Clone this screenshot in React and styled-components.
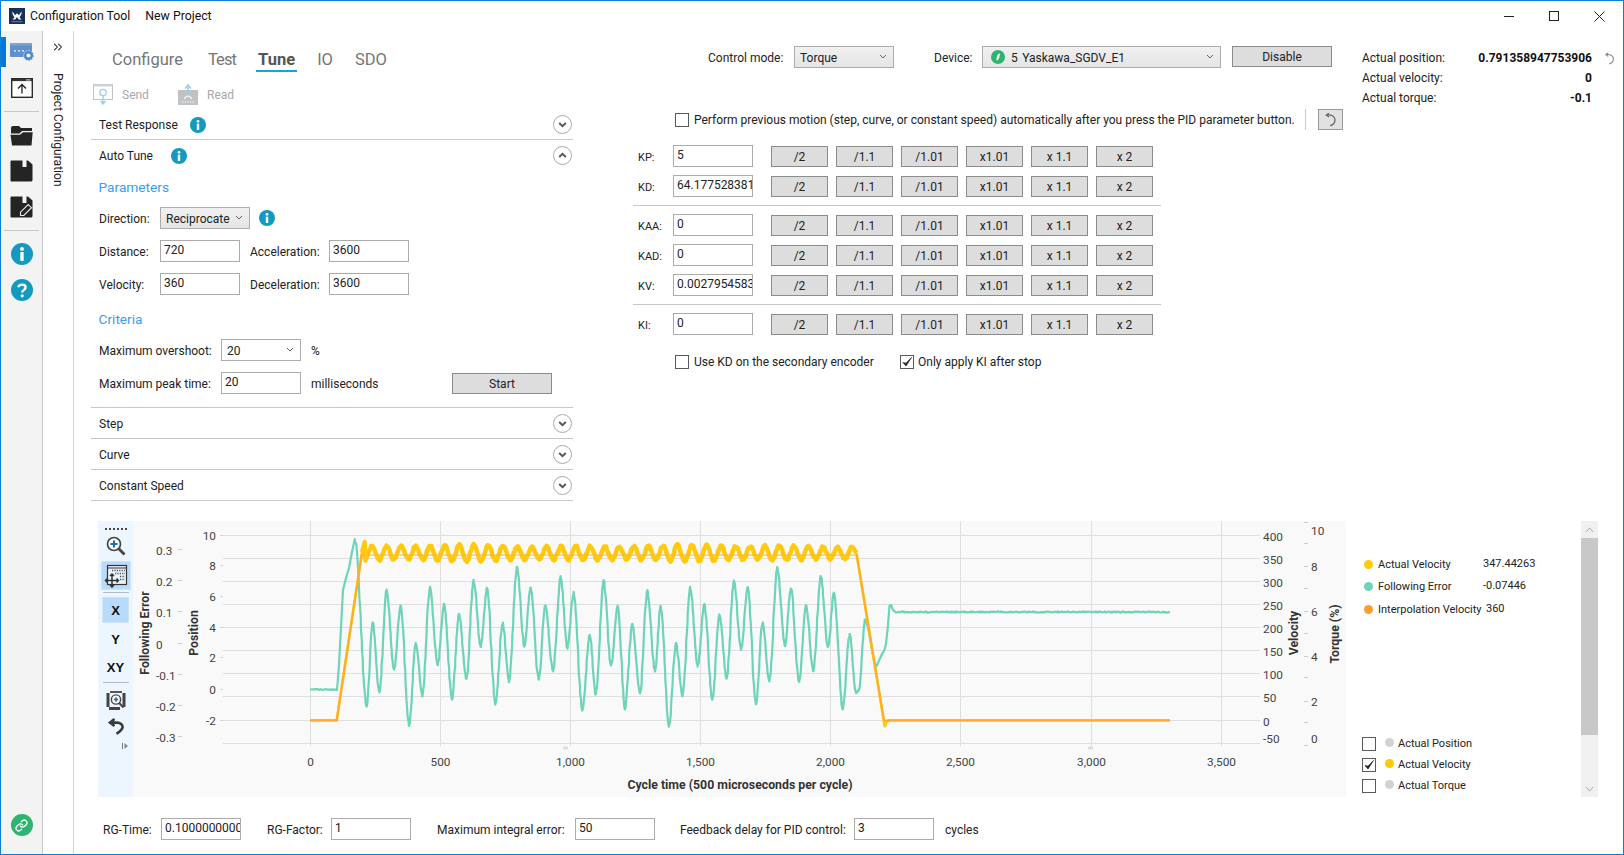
import React from "react";
import styled, { createGlobalStyle } from "styled-components";
import { ChevronsRight, Link as LinkIcon } from "lucide-react";

const Global = createGlobalStyle`
  html, body { margin: 0; padding: 0; background: #fff; }
  body { font-family: "Roboto", "Liberation Sans", sans-serif; font-size: 12px; color: #222; }
  * { box-sizing: border-box; }
`;

const Window = styled.div`
  width: 1624px; height: 855px; border: 1px solid #0a7fd6; background: #fff;
  display: flex; flex-direction: column; overflow: hidden;
`;
const TitleBar = styled.header`
  height: 30px; flex: none; display: flex; align-items: center; padding-left: 8px; position: relative;
`;
const TitleText = styled.span`
  font-size: 12.3px; color: #111; margin-left: ${p => p.$ml}px; white-space: nowrap; margin-top: -1px;
`;
const WinControls = styled.div`
  margin-left: auto; display: flex; align-items: center; gap: 35px; padding-right: 18px;
`;
const Body = styled.div`display: flex; flex: 1; min-height: 0;`;
const Rail = styled.nav`
  width: 42px; flex: none; background: #f3f3f3; border-right: 1px solid #c9c9c9;
  display: flex; flex-direction: column; align-items: center; position: relative; padding-top: 12px;
`;
const RailMark = styled.i`
  position: absolute; left: 0; top: 6px; width: 5px; height: 30px; background: #0a78d7;
`;
const RailIcon = styled.div`
  width: 24px; height: ${p => p.$h || 22}px; margin-top: ${p => p.$mt || 0}px; display: flex; align-items: center; justify-content: center;
`;
const RailRule = styled.hr`
  width: 35px; margin: ${p => p.$m}px 0 0; border: 0; border-top: 1px solid #c8c8c8;
`;
const RailLink = styled.div`
  margin-top: auto; margin-bottom: 18px; width: 22px; height: 22px; border-radius: 50%; background: #2db56f;
  display: flex; align-items: center; justify-content: center; color: #fff;
`;
const SidePanel = styled.aside`
  width: 31px; flex: none; border-right: 1px solid #d4d4d4; display: flex; flex-direction: column; align-items: center;
  padding-top: 9px; color: #222;
`;
const VerticalTitle = styled.span`
  writing-mode: vertical-rl; font-size: 12.1px; margin-top: 19px; white-space: nowrap; color: #222; line-height: 14px;
`;
const Main = styled.main`flex: 1; min-width: 0; display: flex; flex-direction: column;`;
const Upper = styled.section`display: flex; height: 490px; flex: none;`;
const LeftPane = styled.div`width: 482px; margin-left: 17px; flex: none;`;
const Tabs = styled.div`height: 41px; display: flex; align-items: flex-end; gap: 18px; padding-left: 19px;`;
const Tab = styled.span`
  font-size: 16.5px; height: 29px; padding: 0 2px; line-height: 34px; white-space: nowrap;
  color: ${p => p.$active ? "#555" : "#767676"}; font-weight: ${p => p.$active ? 700 : 400};
  border-bottom: 2px solid ${p => p.$active ? "#0ea7e0" : "transparent"};
  letter-spacing: ${p => p.$ls || 0}px; margin-right: ${p => p.$mr || 0}px;
`;
const ActionRow = styled.div`height: 20px; margin-top: 12px; display: flex; align-items: center; padding-left: 2px;`;
const ActionText = styled.span`color: #a8a8a8; font-size: 12px; margin-left: 9px; padding-top: 2px; width: ${p => p.$w}px;`;
const AccHeader = styled.div`
  height: ${p => p.$h || 31}px; display: flex; align-items: center; padding: 0 1px 0 8px; margin-top: ${p => p.$mt || 0}px;
  border-bottom: ${p => p.$flat ? "0" : "1px solid #c9c9c9"};
`;
const AccTitle = styled.span`
  font-size: 12px; color: #1c1c1c; width: ${p => p.$w ? `${p.$w}px` : "auto"}; white-space: nowrap; padding-top: ${p => p.$low ? 2 : 0}px;
`;
const Chevron = styled.span`margin-left: auto; display: flex;`;
const AccBody = styled.div`padding: 5px 0 13px 8px; border-bottom: 1px solid #c9c9c9; display: flex; flex-direction: column;`;
const SectionHead = styled.h3`
  margin: ${p => p.$mt || 0}px 0 0; height: 20px; line-height: 22px; font-size: 13.7px; font-weight: 400; color: #3c9bef; margin-left: -0.5px;
`;
const FormRow = styled.div`display: flex; align-items: center; height: 22px; margin-top: ${p => p.$mt}px;`;
const InfoSlot = styled.span`margin-left: 9px; display: flex;`;
const Label = styled.label`
  width: ${p => p.$w}px; flex: none; font-size: 12px; color: #222; white-space: nowrap; margin-left: ${p => p.$ml || 0}px; padding-top: 2px;
`;
const Field = styled.input`
  width: ${p => p.$w || 80}px; height: 22px; flex: none; border: 1px solid #ababab; background: #fff; outline: 0; border-radius: 0;
  padding: 0 0 3px 3px; font: 12px "Roboto", sans-serif; color: #222; margin: 0;
`;
const Select = styled.div`
  width: ${p => p.$w}px; height: 22px; flex: none; border: 1px solid #acacac; display: flex; align-items: center; padding: 2px 6px 0 5px;
  background: ${p => p.$white ? "#fff" : "linear-gradient(#f0f0f0,#e5e5e5)"}; font-size: 12px; color: #222; white-space: nowrap; word-spacing: 1.5px;
`;
const SelectArrow = styled.span`margin-left: auto; display: flex; margin-top: -3px;`;
const Btn = styled.button`
  width: ${p => p.$w}px; height: 21px; flex: none; background: #dddddd; border: 1px solid #8c8c8c; border-radius: 0; padding: 1px 0 0;
  font: 12px "Roboto", sans-serif; color: #222; margin: 0 0 0 ${p => p.$ml || 0}px;
`;
const RightPane = styled.div`margin-left: 60px; display: flex; padding-top: 15px; flex: none;`;
const TuneCol = styled.div`width: 712px; flex: none;`;
const ControlRow = styled.div`display: flex; align-items: flex-start; height: 22px; padding-left: 75px;`;
const CtlLabel = styled.span`width: ${p => p.$w}px; flex: none; font-size: 12px; line-height: 24px; white-space: nowrap;`;
const Gap = styled.span`width: ${p => p.$w}px; flex: none;`;
const DeviceLed = styled.span`margin-right: 6px; display: flex; margin-left: 3px; margin-top: -2px;`;
const AutoRow = styled.div`display: flex; align-items: center; height: 21px; margin-top: 41px; padding-left: 42px;`;
const Box = styled.span`
  width: 14px; height: 14px; flex: none; border: 1px solid #5a5a5a; background: #fff; display: flex; align-items: center; justify-content: center;
`;
const CheckText = styled.span`font-size: 12px; color: #222; white-space: nowrap; margin-left: ${p => p.$ml ?? 5}px; width: ${p => p.$w}px; flex: none;`;
const VRule = styled.span`width: 1px; height: 21px; background: #c8c8c8; flex: none; margin-right: 12px;`;
const SquareBtn = styled.button`
  width: 25px; height: 21px; padding: 0; background: #e1e1e1; border: 1px solid #999; display: flex; align-items: center; justify-content: center; color: #555;
`;
const GainRows = styled.div`margin-top: 16px; width: 528px;`;
const GainRow = styled.div`display: flex; align-items: flex-start; height: 21px; margin-top: ${p => p.$first ? 0 : 9}px; padding-left: 5px;`;
const GainLabel = styled.span`width: 35px; flex: none; line-height: 23px; font-size: 11px; color: #222;`;
const GainField = styled(Field)`margin: -1px 18px 0 0;`;
const GainBtns = styled.div`display: flex; gap: 8px;`;
const HRule = styled.hr`margin: 8px 0 9px; border: 0; border-top: 1px solid #c8c8c8;`;
const CheckRow = styled.div`display: flex; align-items: center; height: 14px; margin-top: 20px; padding-left: 42px;`;
const Readout = styled.div`margin-left: 17px; width: 254px; flex: none; padding-top: 2px;`;
const ReadRow = styled.div`display: flex; align-items: center; height: 20px; font-size: 12px;`;
const ReadName = styled.span`width: 150px; flex: none;`;
const ReadValue = styled.b`width: 80px; flex: none; text-align: right; color: #111; font-weight: 700; white-space: nowrap; display: flex; justify-content: flex-end;`;
const ReadIcon = styled.span`margin-left: 11px; display: flex; color: #888;`;

const ChartArea = styled.section`height: 276px; flex: none; display: flex; margin-left: 24px; width: 1500px;`;
const Toolbar = styled.div`width: 35px; flex: none; background: #edf5ff; display: flex; flex-direction: column; align-items: center;`;
const ToolDots = styled.div`margin-top: 7px; width: 22px; height: 2px; border-top: 2px dotted #444;`;
const ToolIcon = styled.div`margin-top: ${p => p.$mt}px; height: ${p => p.$h}px; display: flex; align-items: center; justify-content: center;`;
const ToolBtn = styled.div`
  width: ${p => p.$w}px; height: ${p => p.$h}px; margin-top: ${p => p.$mt || 0}px; display: flex; align-items: center; justify-content: center;
  font-size: 13px; font-weight: 700; font-family: "Liberation Sans", sans-serif; color: #111;
  background: ${p => p.$active ? "#b9dbfb" : "transparent"}; border: 1px solid ${p => p.$active ? "#cfe3f7" : "transparent"};
`;
const ToolRule = styled.hr`width: 26px; margin: ${p => p.$mt}px 0 0; border: 0; border-top: 1px solid #aebccb;`;
const ToolFoot = styled.div`align-self: flex-end; margin: 8px 5px 0 0; display: flex;`;
const Plot = styled.svg`width: 1213px; height: 276px; flex: none; display: block; background: #f9f9f9;`;
const Legend = styled.div`width: 235px; flex: none; display: flex; flex-direction: column; padding-top: 32px;`;
const ValueRow = styled.div`display: flex; align-items: center; height: 22.5px; padding-left: 18px; font-size: 11px;`;
const Dot = styled.i`width: 9px; height: 9px; border-radius: 50%; background: ${p => p.$c}; flex: none;`;
const ValueName = styled.span`margin-left: 5px; width: ${p => p.$w || 105}px; flex: none; white-space: nowrap; color: #222;`;
const ValueNum = styled.span`margin-top: -2px; color: #222;`;
const CheckList = styled.div`margin-top: auto; padding-bottom: 1px;`;
const SeriesRow = styled.div`display: flex; align-items: center; height: 21px; padding-left: 16px; font-size: 11px;`;
const SeriesDot = styled(Dot)`margin: 0 4px 2px 9px;`;
const Scrollbar = styled.div`width: 17px; flex: none; background: #f0f0f0; display: flex; flex-direction: column; align-items: center;`;
const ScrollEnd = styled.div`height: 17px; flex: none; display: flex; align-items: center; justify-content: center; margin-top: ${p => p.$auto ? "auto" : "0"};`;
const ScrollThumb = styled.div`height: 197px; width: 100%; background: #c8c8c8; flex: none;`;
const Bottom = styled.footer`display: flex; align-items: center; height: 22px; margin-top: 21px; padding-left: 29px;`;
const BottomText = styled.span`font-size: 12px; margin-left: ${p => p.$ml || 0}px; color: #222; padding-top: 2px;`;

/* ---------- icons ---------- */
const I = ({ w = 16, h = 16, vb, children }) => (
  <svg width={w} height={h} viewBox={vb || `0 0 ${w} ${h}`} style={{ display: "block" }}>{children}</svg>
);
const Logo = () => (
  <I w={16} h={16}>
    <rect width="16" height="16" fill="#17305a" />
    <path d="M3.5 3.2 L6 7.2 L8 5.2 L10 7.2 L12.5 3.2 L12.5 6 L10.6 9.5 L12.5 11.5 L9.8 11.5 L8 9 L6.2 11.5 L3.5 11.5 L5.4 9.5 L3.5 6 Z" fill="#fff" />
    <rect x="2.5" y="13" width="11" height="1.2" fill="#3a78c2" />
  </I>
);
const InfoIcon = ({ s = 16 }) => (
  <I w={s} h={s} vb="0 0 16 16">
    <circle cx="8" cy="8" r="8" fill="#149ac0" />
    <rect x="6.8" y="6.6" width="2.4" height="6.4" fill="#fff" />
    <circle cx="8" cy="4.3" r="1.4" fill="#fff" />
  </I>
);
const HelpIcon = () => (
  <I w={22} h={22} vb="0 0 22 22">
    <circle cx="11" cy="11" r="11" fill="#149ac0" />
    <path d="M7.5 8.2 C7.5 4.8 14.6 4.8 14.6 8.4 C14.6 11 11.2 10.8 11.2 13.6" fill="none" stroke="#fff" strokeWidth="2.4" />
    <circle cx="11.2" cy="16.8" r="1.6" fill="#fff" />
  </I>
);
const Chev = ({ up }) => (
  <I w={19} h={19}>
    <circle cx="9.5" cy="9.5" r="9" fill="#fff" stroke="#ababab" />
    <path d={up ? "M6.2 11 L9.5 7.8 L12.8 11" : "M6.2 8 L9.5 11.2 L12.8 8"} fill="none" stroke="#555" strokeWidth="1.9" />
  </I>
);
const Drop = () => (
  <I w={8} h={6}><path d="M1 1 L4 4 L7 1" fill="none" stroke="#666" strokeWidth="1" /></I>
);
const Undo = ({ c = "#666", s = 15 }) => (
  <I w={s} h={s} vb="0 0 13 13">
    <path d="M5 1 L2.8 2.8 L5.3 4.4 M3 2.8 C7 1.8 10.4 3.8 10.4 6.8 C10.4 9.4 8.6 11.4 6.2 11.9" fill="none" stroke={c} strokeWidth="1.1" />
  </I>
);
const RailGear = () => (
  <I w={24} h={18}>
    <rect x="0" y="0" width="22" height="14" rx="1" fill="#5e91cd" />
    <rect x="0" y="0" width="22" height="2.4" fill="#7aa7da" />
    <rect x="4" y="7" width="2" height="1.6" fill="#cfe0f4" /><rect x="8" y="7" width="2" height="1.6" fill="#cfe0f4" /><rect x="12" y="7" width="2" height="1.6" fill="#cfe0f4" />
    <circle cx="18.5" cy="12.5" r="5.2" fill="#f3f3f3" />
    <circle cx="18.5" cy="12.5" r="3.3" fill="none" stroke="#4d88c9" strokeWidth="2.4" />
    <circle cx="18.5" cy="12.5" r="4.6" fill="none" stroke="#4d88c9" strokeWidth="1.2" strokeDasharray="1.5 1.3" />
  </I>
);
const RailUpload = () => (
  <I w={22} h={20}>
    <rect x="0.7" y="0.7" width="20.6" height="18.6" fill="#fff" stroke="#2b2b2b" strokeWidth="1.4" />
    <rect x="0.7" y="0.7" width="20.6" height="2.4" fill="#333" />
    <rect x="15" y="1.3" width="4.5" height="1.2" fill="#bbb" />
    <path d="M11 15.5 V7 M7 10.5 L11 6.5 L15 10.5" fill="none" stroke="#222" strokeWidth="1.3" />
  </I>
);
const RailFolder = () => (
  <I w={23} h={21}>
    <path d="M1 3 Q1 1 3 1 H9 L11 3 H22 V6 H12 L9.5 8.5 H1 Z" fill="#252525" />
    <path d="M0.5 9.8 H10 L13 7.2 H22.7 L21.5 20.5 H2 Z" fill="#252525" />
  </I>
);
const RailSave = () => (
  <I w={23} h={22}>
    <path d="M1.5 0.5 H12.5 V7 H16.5 V0.5 H18 L22.5 4.5 V20 Q22.5 21.5 21 21.5 H1.5 Q0.5 21.5 0.5 20.5 V1.5 Q0.5 0.5 1.5 0.5 Z" fill="#242424" />
  </I>
);
const RailSaveEdit = () => (
  <I w={23} h={22}>
    <path d="M1.5 0.5 H12.5 V7 H16.5 V0.5 H18 L22.5 4.5 V20 Q22.5 21.5 21 21.5 H1.5 Q0.5 21.5 0.5 20.5 V1.5 Q0.5 0.5 1.5 0.5 Z" fill="#242424" />
    <path d="M10.5 19.5 L10.5 16.2 L18.2 8.5 L21.5 11.7 L13.8 19.5 Z" fill="#242424" stroke="#e9e9e9" strokeWidth="1.1" />
  </I>
);
const Led = () => (
  <I w={14} h={14}>
    <circle cx="7" cy="7" r="7" fill="#2db56f" />
    <path d="M8.6 3 C6 4.6 5.2 7.4 5.6 10.8 C8 9.6 9.2 6.6 8.6 3 Z" fill="#fff" />
  </I>
);
const Tick = () => (
  <I w={12} h={12}><path d="M2 6.5 L5 10 L10.5 1.5 L5 7.2 Z" fill="#222" stroke="#222" strokeWidth=".7" /></I>
);
const SendIcon = () => (
  <I w={20} h={21}>
    <rect x="0.5" y="0.5" width="19" height="15" fill="#fff" stroke="#bfc4c8" />
    <rect x="0.5" y="0.5" width="19" height="2" fill="#cfd3d6" />
    <circle cx="10" cy="8.5" r="3.2" fill="none" stroke="#9ad0e8" strokeWidth="1.3" />
    <path d="M10 12 V19 M7.5 17 L10 20 L12.5 17" fill="none" stroke="#9ad0e8" strokeWidth="1.4" />
  </I>
);
const ReadIconArt = () => (
  <I w={20} h={21}>
    <rect x="0" y="6" width="20" height="15" fill="#bfc3c6" />
    <path d="M10 12 V2 M7 4.5 L10 1 L13 4.5" fill="none" stroke="#9ad0e8" strokeWidth="1.6" />
    <path d="M6 15 Q10 9 14 15" fill="none" stroke="#fff" strokeWidth="1.1" />
    <path d="M4 18 H16" stroke="#fff" strokeWidth="1" strokeDasharray="1.4 1.2" />
  </I>
);
const ZoomIn = () => (
  <I w={20} h={20}>
    <circle cx="8" cy="8" r="6.5" fill="#fff" stroke="#444" strokeWidth="1.7" />
    <path d="M4.5 8 H11.5 M8 4.5 V11.5" stroke="#1f6cb0" strokeWidth="2" />
    <path d="M12.8 12.8 L18.5 18.5" stroke="#444" strokeWidth="2.8" />
  </I>
);
const PanGrid = () => (
  <I w={24} h={24}>
    <rect x="3.5" y="1.5" width="19" height="19" fill="#e9f3fd" stroke="#333" strokeWidth="1.2" />
    <path d="M3.5 4 H22.5" stroke="#333" strokeWidth="1" />
    <path d="M8 6.5 H21 M11 9.5 H21 M16 12.5 H21 M16 15.5 H21" stroke="#555" strokeWidth="1.4" strokeDasharray="1.2 1.2" />
    <path d="M8 10 V23 M1.5 16.5 H14.5 M6 12 L8 10 L10 12 M6 21 L8 23 L10 21 M3.5 14.5 L1.5 16.5 L3.5 18.5 M12.5 14.5 L14.5 16.5 L12.5 18.5" fill="none" stroke="#333" strokeWidth="1.5" />
  </I>
);
const ZoomWin = () => (
  <I w={20} h={21}>
    <rect x="0.5" y="3" width="3" height="14" fill="#444" />
    <rect x="16.5" y="3" width="3" height="14" fill="#444" />
    <rect x="4" y="1" width="12" height="2" fill="#555" />
    <rect x="3" y="17" width="11" height="3" fill="#444" />
    <circle cx="10" cy="9.5" r="4.6" fill="#fff" stroke="#444" strokeWidth="1.4" />
    <path d="M7.8 9.5 H12.2 M10 7.3 V11.7" stroke="#1f6cb0" strokeWidth="1.5" />
    <path d="M13.2 13 L17.5 17.5" stroke="#444" strokeWidth="2" />
  </I>
);
const BigUndo = () => (
  <I w={16} h={17}>
    <path d="M6.5 1 L2 4.6 L6.5 8 M2.6 4.6 H9 C12.6 4.6 14.6 6.6 14.6 9 C14.6 11.8 12 13.4 8.5 15.8" fill="none" stroke="#3a3a3a" strokeWidth="2.6" />
  </I>
);

/* ---------- chart data (page coordinates) ---------- */
const noise = i => { const v = Math.sin(i * 12.9898) * 43758.5453; return (v - Math.floor(v)) * 2 - 1; };
const z4 = ([x, y]) => [90 + x / 3, 510 + y / 3];
const z5 = ([x, y]) => [560 + x / 3, 510 + y / 3];
const waves = [
  ...[[795,90],[830,590],[848,335],[868,548],[890,240],[912,480],[932,288],[957,648],[977,400],[997,557],[1020,232],[1043,465],[1062,283],[1086,568],[1107,312],[1129,507],[1151,212],[1172,410],[1191,235],[1216,582],[1238,340],[1257,515],[1281,172],[1303,410],[1322,233],[1346,510],[1366,285],[1389,483]].map(z4),
  ...[[2,200],[22,415],[41,248],[67,600],[89,375],[107,552],[131,212],[153,465],[173,288],[195,597],[217,340],[240,550],[262,242],[285,483],[302,288],[327,648],[348,400],[367,557],[391,233],[413,468],[433,283],[457,570],[478,315],[500,505],[522,212],[543,418],[563,233],[588,582],[608,338],[628,515],[652,173],[675,408],[693,235],[717,515],[738,285],[760,483],[782,198],[804,412],[822,248],[848,598],[869,373],[888,548],[897,540],[915,330],[950,468]].map(z5),
];
const toPath = pts => "M" + pts.map(([x, y]) => `${x.toFixed(1)} ${y.toFixed(1)}`).join("L");
const buildGreen = () => {
  const pts = [];
  for (let x = 310; x < 336.5; x += 1.5) pts.push([x, 689.5 + noise(x) * 0.5]);
  pts.push([337, 690], [339, 665], [343, 590], [346, 578], [349, 568], [352, 552]);
  let k = 0;
  for (let s = 0; s < waves.length - 1; s++) {
    const [x0, y0] = waves[s], [x1, y1] = waves[s + 1];
    const n = Math.max(3, Math.round((x1 - x0) / 0.5));
    for (let j = 0; j <= n; j++) {
      const t = j / n, c = 0.85 * (1 - Math.cos(Math.PI * t)) / 2 + 0.15 * t;
      pts.push([x0 + (x1 - x0) * t + noise(k * 3.1) * 0.25, y0 + (y1 - y0) * c + noise(k++) * 0.8]);
    }
  }
  pts.push([882, 654], [884, 651], [886, 644], [888, 625], [889.5, 606], [891, 605], [893, 610], [896, 612.5]);
  for (let x = 897; x <= 1170; x += 1) pts.push([x, 612 + noise(x * 1.7) * 0.6]);
  return toPath(pts);
};
const buildRipple = () => {
  const pts = [[362, 552], [364.7, 542]];
  let k = 0;
  for (let x = 365; x <= 853; x += 0.5) {
    const a = 6.8 + 1.3 * Math.sin(x / 23) * Math.sin(x / 61);
    const y = 553 + a * Math.cos((2 * Math.PI * (x - 364.7)) / 14.55) + noise(k++) * 1.3;
    pts.push([x, y]);
  }
  pts.push([856.5, 553]);
  return toPath(pts);
};
const yellowEdge = "M310 720.3 L336.7 720.3 L362 552 M856.5 553 L884.8 727 L886.5 722 L889 720.3 L1170 720.3";
const ripplePath = buildRipple();
const greenPath = buildGreen();
const orangeTop = "M361.7 555 L856.7 555";
const orangeRamps = "M310 720.5 L336.7 720.5 L361.7 555 M856.7 555 L884 720.5 L1170 720.5";

const gridY = [535.5, 558.5, 581.5, 604.5, 627.5, 650.5, 673.5, 696.5, 720.5, 743.5];
const gridX = [[310.5, "0"], [440.5, "500"], [570.5, "1,000"], [700.5, "1,500"], [830.5, "2,000"], [960.5, "2,500"], [1091.5, "3,000"], [1221.5, "3,500"]];
const posAxis = [["10", 535], ["8", 565], ["6", 596], ["4", 627], ["2", 657], ["0", 689], ["-2", 720]];
const errAxis = [["0.3", 550], ["0.2", 581], ["0.1", 612], ["0", 644], ["-0.1", 675], ["-0.2", 706], ["-0.3", 737]];
const velAxis = [["400", 536], ["350", 559], ["300", 582], ["250", 605], ["200", 628], ["150", 651], ["100", 674], ["50", 697], ["0", 721], ["-50", 738]];
const torqueAxis = [["10", 530], ["8", 566], ["6", 611], ["4", 656], ["2", 701], ["0", 738]];
const torqueTicks = [522, 543, 566, 588, 611, 633, 656, 677, 701, 722, 745];
const tickFont = { fontFamily: "Roboto, sans-serif", fontSize: 11.8, fill: "#444" };
const axisFont = { fontFamily: "Roboto, sans-serif", fontSize: 12.3, fontWeight: 700, fill: "#333" };

const Chart = () => (
  <Plot viewBox="133 521 1213 276">
    {gridY.map(y => <line key={y} x1="223" x2="1260" y1={y} y2={y} stroke="#dedede" />)}
    {gridX.map(([x]) => <line key={x} x1={x} x2={x} y1="521" y2="746" stroke="#dedede" />)}
    {[[565, 748], [1090, 748]].map(([x, y]) => <rect key={x} x={x - 2} y={y - 1.5} width="5" height="3" fill="#dfdfdf" />)}
    {posAxis.map(([t, y]) => (
      <g key={t}>
        <line x1="220.5" x2="223" y1={y + .5} y2={y + .5} stroke="#ccc" />
        <text {...tickFont} x="216" y={y + 5} textAnchor="end">{t}</text>
      </g>
    ))}
    {errAxis.map(([t, y]) => (
      <g key={t}>
        <line x1="178" x2="182" y1={y - .5} y2={y - .5} stroke="#ccc" />
        <text {...tickFont} x="156" y={y + 5}>{t}</text>
      </g>
    ))}
    {velAxis.map(([t, y]) => <text key={t} {...tickFont} x="1263" y={y + 5}>{t}</text>)}
    {torqueAxis.map(([t, y]) => <text key={t} {...tickFont} x="1311" y={y + 5}>{t}</text>)}
    {torqueTicks.map(y => <line key={y} x1="1304" x2="1308" y1={y + .5} y2={y + .5} stroke="#ccc" />)}
    {gridX.map(([x, t]) => <text key={t} {...tickFont} x={x} y="766" textAnchor="middle">{t}</text>)}
    <text {...axisFont} x="740" y="789" textAnchor="middle">Cycle time (500 microseconds per cycle)</text>
    <text {...axisFont} transform="translate(149 633) rotate(-90)" textAnchor="middle">Following Error</text>
    <text {...axisFont} transform="translate(198 633) rotate(-90)" textAnchor="middle">Position</text>
    <text {...axisFont} transform="translate(1298 633) rotate(-90)" textAnchor="middle">Velocity</text>
    <text {...axisFont} transform="translate(1339 634) rotate(-90)" textAnchor="middle">Torque (%)</text>
    <path d={greenPath} fill="none" stroke="#6dd3b9" strokeWidth="2.2" strokeLinejoin="round" />
    <path d={yellowEdge} fill="none" stroke="#ffc90e" strokeWidth="2.6" />
    <path d={ripplePath} fill="none" stroke="#ffc90e" strokeWidth="4.4" strokeLinejoin="round" />
    <path d={orangeRamps} fill="none" stroke="#ffac2a" strokeWidth="2" strokeLinejoin="round" />
    <path d={orangeTop} fill="none" stroke="#ffb040" strokeWidth="1" />
  </Plot>
);

const factors = ["/2", "/1.1", "/1.01", "x1.01", "x 1.1", "x 2"];
const Gain = ({ label, value, first }) => (
  <GainRow $first={first}>
    <GainLabel>{label}</GainLabel>
    <GainField readOnly value={value} />
    <GainBtns>{factors.map(f => <Btn key={f} $w={57}>{f}</Btn>)}</GainBtns>
  </GainRow>
);

export default function App() {
  return (
    <Window>
      <Global />
      <TitleBar>
        <Logo />
        <TitleText $ml={5}>Configuration Tool</TitleText>
        <TitleText $ml={15}>New Project</TitleText>
        <WinControls>
          <I w={10} h={10}><path d="M0 5.5 H10" stroke="#222" /></I>
          <I w={10} h={10}><rect x=".5" y=".5" width="9" height="9" fill="none" stroke="#222" /></I>
          <I w={11} h={11}><path d="M.5 .5 L10.5 10.5 M10.5 .5 L.5 10.5" stroke="#222" /></I>
        </WinControls>
      </TitleBar>
      <Body>
        <Rail>
          <RailMark />
          <RailIcon $h={18}><RailGear /></RailIcon>
          <RailIcon $h={20} $mt={17}><RailUpload /></RailIcon>
          <RailRule $m={13} />
          <RailIcon $h={21} $mt={13}><RailFolder /></RailIcon>
          <RailIcon $h={22} $mt={14}><RailSave /></RailIcon>
          <RailIcon $h={22} $mt={14}><RailSaveEdit /></RailIcon>
          <RailRule $m={12} />
          <RailIcon $h={22} $mt={12}><InfoIcon s={22} /></RailIcon>
          <RailIcon $h={22} $mt={14}><HelpIcon /></RailIcon>
          <RailLink><LinkIcon size={13} strokeWidth={2.4} /></RailLink>
        </Rail>
        <SidePanel>
          <ChevronsRight size={14} strokeWidth={1.8} />
          <VerticalTitle>Project Configuration</VerticalTitle>
        </SidePanel>
        <Main>
          <Upper>
            <LeftPane>
              <Tabs>
                <Tab $mr={3}>Configure</Tab>
                <Tab $ls={-0.9}>Test</Tab>
                <Tab $active>Tune</Tab>
                <Tab>IO</Tab>
                <Tab>SDO</Tab>
              </Tabs>
              <ActionRow>
                <SendIcon />
                <ActionText $w={56}>Send</ActionText>
                <ReadIconArt />
                <ActionText $w={40}>Read</ActionText>
              </ActionRow>
              <AccHeader $h={30} $mt={6}>
                <AccTitle $w={91}>Test Response</AccTitle>
                <InfoIcon />
                <Chevron><Chev /></Chevron>
              </AccHeader>
              <AccHeader $flat>
                <AccTitle $w={72}>Auto Tune</AccTitle>
                <InfoIcon />
                <Chevron><Chev up /></Chevron>
              </AccHeader>
              <AccBody>
                <SectionHead>Parameters</SectionHead>
                <FormRow $mt={11}>
                  <Label $w={61}>Direction:</Label>
                  <Select $w={90}>Reciprocate<SelectArrow><Drop /></SelectArrow></Select>
                  <InfoSlot><InfoIcon /></InfoSlot>
                </FormRow>
                <FormRow $mt={11}>
                  <Label $w={61}>Distance:</Label>
                  <Field readOnly value="720" />
                  <Label $w={79} $ml={10}>Acceleration:</Label>
                  <Field readOnly value="3600" />
                </FormRow>
                <FormRow $mt={11}>
                  <Label $w={61}>Velocity:</Label>
                  <Field readOnly value="360" />
                  <Label $w={79} $ml={10}>Deceleration:</Label>
                  <Field readOnly value="3600" />
                </FormRow>
                <SectionHead $mt={13}>Criteria</SectionHead>
                <FormRow $mt={11}>
                  <Label $w={122}>Maximum overshoot:</Label>
                  <Select $w={80} $white>20<SelectArrow><Drop /></SelectArrow></Select>
                  <Label $w={20} $ml={10}>%</Label>
                </FormRow>
                <FormRow $mt={11}>
                  <Label $w={122}>Maximum peak time:</Label>
                  <Field readOnly value="20" />
                  <Label $w={141} $ml={10}>milliseconds</Label>
                  <Btn $w={100}>Start</Btn>
                </FormRow>
              </AccBody>
              <AccHeader><AccTitle $low>Step</AccTitle><Chevron><Chev /></Chevron></AccHeader>
              <AccHeader><AccTitle $low>Curve</AccTitle><Chevron><Chev /></Chevron></AccHeader>
              <AccHeader><AccTitle $low>Constant Speed</AccTitle><Chevron><Chev /></Chevron></AccHeader>
            </LeftPane>
            <RightPane>
              <TuneCol>
                <ControlRow>
                  <CtlLabel $w={86}>Control mode:</CtlLabel>
                  <Select $w={100}>Torque<SelectArrow><Drop /></SelectArrow></Select>
                  <Gap $w={40} />
                  <CtlLabel $w={48}>Device:</CtlLabel>
                  <Select $w={239}><DeviceLed><Led /></DeviceLed>5 Yaskawa_SGDV_E1<SelectArrow><Drop /></SelectArrow></Select>
                  <Gap $w={11} />
                  <Btn $w={100}>Disable</Btn>
                </ControlRow>
                <AutoRow>
                  <Box />
                  <CheckText $w={611}>Perform previous motion (step, curve, or constant speed) automatically after you press the PID parameter button.</CheckText>
                  <VRule />
                  <SquareBtn><Undo /></SquareBtn>
                </AutoRow>
                <GainRows>
                  <Gain first label="KP:" value="5" />
                  <Gain label="KD:" value="64.1775283813" />
                  <HRule />
                  <Gain first label="KAA:" value="0" />
                  <Gain label="KAD:" value="0" />
                  <Gain label="KV:" value="0.00279545833" />
                  <HRule />
                  <Gain first label="KI:" value="0" />
                </GainRows>
                <CheckRow>
                  <Box />
                  <CheckText $w={206}>Use KD on the secondary encoder</CheckText>
                  <Box><Tick /></Box>
                  <CheckText $w={140} $ml={4}>Only apply KI after stop</CheckText>
                </CheckRow>
              </TuneCol>
              <Readout>
                <ReadRow>
                  <ReadName>Actual position:</ReadName>
                  <ReadValue>0.791358947753906</ReadValue>
                  <ReadIcon><Undo c="#888" s={13} /></ReadIcon>
                </ReadRow>
                <ReadRow><ReadName>Actual velocity:</ReadName><ReadValue>0</ReadValue></ReadRow>
                <ReadRow><ReadName>Actual torque:</ReadName><ReadValue>-0.1</ReadValue></ReadRow>
              </Readout>
            </RightPane>
          </Upper>
          <ChartArea>
            <Toolbar>
              <ToolDots />
              <ToolIcon $mt={6} $h={20}><ZoomIn /></ToolIcon>
              <ToolBtn $active $w={30} $h={29} $mt={5}><PanGrid /></ToolBtn>
              <ToolRule $mt={2} />
              <ToolBtn $active $w={27} $h={26} $mt={4}>X</ToolBtn>
              <ToolBtn $w={27} $h={26} $mt={3}>Y</ToolBtn>
              <ToolBtn $w={27} $h={26} $mt={2}>XY</ToolBtn>
              <ToolRule $mt={2} />
              <ToolIcon $mt={7} $h={21}><ZoomWin /></ToolIcon>
              <ToolIcon $mt={7} $h={17}><BigUndo /></ToolIcon>
              <ToolFoot><I w={6} h={6}><path d="M.5 0 V6" stroke="#777" /><path d="M2.5 0 L6 3 L2.5 6 Z" fill="#888" /></I></ToolFoot>
            </Toolbar>
            <Chart />
            <Legend>
              <ValueRow><Dot $c="#ffca0a" /><ValueName>Actual Velocity</ValueName><ValueNum>347.44263</ValueNum></ValueRow>
              <ValueRow><Dot $c="#6dd3b9" /><ValueName>Following Error</ValueName><ValueNum>-0.07446</ValueNum></ValueRow>
              <ValueRow><Dot $c="#ff9d2e" /><ValueName $w={108}>Interpolation Velocity</ValueName><ValueNum>360</ValueNum></ValueRow>
              <CheckList>
                <SeriesRow><Box /><SeriesDot $c="#d2d2d2" />Actual Position</SeriesRow>
                <SeriesRow><Box><Tick /></Box><SeriesDot $c="#ffca0a" />Actual Velocity</SeriesRow>
                <SeriesRow><Box /><SeriesDot $c="#d2d2d2" />Actual Torque</SeriesRow>
              </CheckList>
            </Legend>
            <Scrollbar>
              <ScrollEnd><I w={9} h={6}><path d="M1 5 L4.5 1 L8 5" fill="none" stroke="#aaa" /></I></ScrollEnd>
              <ScrollThumb />
              <ScrollEnd $auto><I w={9} h={6}><path d="M1 1 L4.5 5 L8 1" fill="none" stroke="#aaa" /></I></ScrollEnd>
            </Scrollbar>
          </ChartArea>
          <Bottom>
            <Label $w={58}>RG-Time:</Label>
            <Field readOnly value="0.10000000000" />
            <Label $w={64} $ml={26}>RG-Factor:</Label>
            <Field readOnly value="1" />
            <Label $w={138} $ml={26}>Maximum integral error:</Label>
            <Field readOnly value="50" />
            <Label $w={174} $ml={25}>Feedback delay for PID control:</Label>
            <Field readOnly value="3" />
            <BottomText $ml={11}>cycles</BottomText>
          </Bottom>
        </Main>
      </Body>
    </Window>
  );
}
